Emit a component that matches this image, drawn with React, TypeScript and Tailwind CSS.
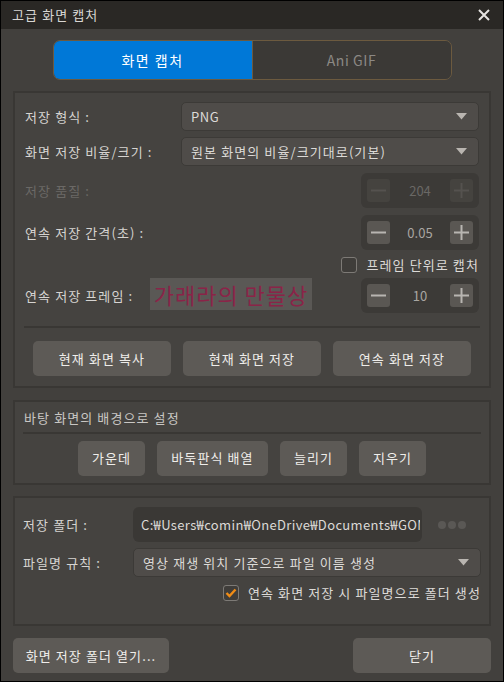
import React, { useState } from "react";

const font = { fontFamily: '"Noto Sans CJK KR", "Noto Sans", sans-serif' };

const Arrow = () => (
  <svg width="11" height="7" viewBox="0 0 11 7" className="shrink-0">
    <path d="M0 0 H11 L5.5 6.5 Z" fill="#b9b5b0" />
  </svg>
);

const Dropdown = ({ value, className }: { value: string; className: string }) => (
  <div
    className={`flex items-center justify-between h-[29px] pl-[9px] pr-[11px] rounded-[5px] bg-[#4f4c49] border border-[#3c3a37] text-[13px] text-[#dcdad7] ${className}`}
  >
    <span>{value}</span>
    <Arrow />
  </div>
);

const SpinButton = ({ plus, disabled }: { plus?: boolean; disabled?: boolean }) => {
  const c = disabled ? "#55524f" : "#b8b5b1";
  return (
    <div
      className={`w-[23px] h-[23px] rounded-[3px] flex items-center justify-center ${
        disabled ? "bg-[#45433f]" : "bg-[#5a5753]"
      }`}
    >
      <svg width="15" height="15" viewBox="0 0 15 15">
        <rect x="0" y="6.5" width="15" height="2" fill={c} />
        {plus && <rect x="6.5" y="0" width="2" height="15" fill={c} />}
      </svg>
    </div>
  );
};

const Spinner = ({ value, disabled }: { value: string; disabled?: boolean }) => (
  <div className="ml-auto w-[118px] h-[35px] rounded-[6px] bg-[#3c3a37] flex items-center justify-between px-[6px]">
    <SpinButton disabled={disabled} />
    <span className={`text-[13px] tracking-normal ${disabled ? "text-[#6a6865]" : "text-[#a9a6a2]"}`}>
      {value}
    </span>
    <SpinButton plus disabled={disabled} />
  </div>
);

const Btn = ({ label, className }: { label: string; className: string }) => (
  <button
    className={`h-[35px] rounded-[5px] bg-[#5d5a56] text-[13px] text-[#efedea] flex items-center justify-center ${className}`}
  >
    {label}
  </button>
);

export default function App() {
  const [tab, setTab] = useState(0);

  return (
    <div
      className="w-[504px] h-[682px] border border-black bg-[#42403d] flex flex-col text-[#d6d4d1] tracking-[1.1px]"
      style={font}
    >
      {/* title bar */}
      <div className="h-[28px] shrink-0 bg-[#2a2825] flex items-center justify-between pl-[11px] pr-[13px]">
        <span className="text-[13px] text-[#d9d7d4]">고급 화면 캡처</span>
        <svg width="12" height="12" viewBox="0 0 12 12">
          <path d="M1 1 L11 11 M11 1 L1 11" stroke="#e6e4e1" strokeWidth="2" />
        </svg>
      </div>

      {/* tabs */}
      <div className="mt-[11px] mx-auto w-[399px] h-[40px] flex rounded-[7px] border border-[#6c5a3f] overflow-hidden">
        <button
          onClick={() => setTab(0)}
          className={`w-[199px] text-[14px] tracking-[1.5px] border-r border-[#6c5a3f] ${
            tab === 0 ? "bg-[#0078d7] text-white" : "bg-[#3b3936] text-[#8b8884]"
          }`}
        >
          화면 캡처
        </button>
        <button
          onClick={() => setTab(1)}
          className={`flex-1 text-[14px] tracking-[0.6px] ${
            tab === 1 ? "bg-[#0078d7] text-white" : "bg-[#3b3936] text-[#8b8884]"
          }`}
        >
          Ani GIF
        </button>
      </div>

      <div className="px-[12px] flex flex-col">
        {/* panel 1 */}
        <div className="mt-[11px] h-[297px] border-2 border-[#393734] bg-[#454340] px-[10px] pt-[9px] flex flex-col">
          <div className="flex items-center">
            <span className="w-[156px] text-[13px]">저장 형식 :</span>
            <Dropdown value="PNG" className="flex-1 tracking-[0.5px]" />
          </div>
          <div className="mt-[6px] flex items-center">
            <span className="w-[156px] text-[13px]">화면 저장 비율/크기 :</span>
            <Dropdown value="원본 화면의 비율/크기대로(기본)" className="flex-1" />
          </div>
          <div className="mt-[7px] flex items-center">
            <span className="text-[13px] text-[#6b6966]">저장 품질 :</span>
            <Spinner value="204" disabled />
          </div>
          <div className="mt-[7px] flex items-center">
            <span className="text-[13px]">연속 저장 간격(초) :</span>
            <Spinner value="0.05" />
          </div>
          <div className="mt-[6px] h-[17px] flex items-center justify-end gap-[9px]">
            <span className="w-[16px] h-[16px] rounded-[3px] border border-[#7d7a76] bg-[#3f3d3a]" />
            <span className="text-[13px] text-[#dcdad7]">프레임 단위로 캡처</span>
          </div>
          <div className="mt-[5px] flex items-center">
            <span className="w-[125px] text-[13px]">연속 저장 프레임 :</span>
            <span className="w-[162px] h-[32px] -mt-[4px] bg-[#5a5855] text-[22px] tracking-[1px] leading-[32px] text-center text-[#8a2448] whitespace-nowrap">
              가래라의 만물상
            </span>
            <Spinner value="10" />
          </div>
          <div className="mt-[13px] mx-[-1px] h-[2px] bg-[#393734]" />
          <div className="mt-[13px] flex justify-between px-[8px]">
            <Btn label="현재 화면 복사" className="w-[138px]" />
            <Btn label="현재 화면 저장" className="w-[138px]" />
            <Btn label="연속 화면 저장" className="w-[138px]" />
          </div>
        </div>

        {/* panel 2 */}
        <div className="mt-[12px] h-[85px] border-2 border-[#393734] bg-[#454340] px-[8px] flex flex-col">
          <span className="mt-[6px] text-[13px] text-[#c9c7c4] pl-[1px]">바탕 화면의 배경으로 설정</span>
          <div className="mt-[4px] h-[2px] bg-[#393734]" />
          <div className="mt-[7px] flex justify-center gap-[12px]">
            <Btn label="가운데" className="w-[67px]" />
            <Btn label="바둑판식 배열" className="w-[111px]" />
            <Btn label="늘리기" className="w-[67px]" />
            <Btn label="지우기" className="w-[67px]" />
          </div>
        </div>

        {/* panel 3 */}
        <div className="mt-[11px] h-[130px] border-2 border-[#393734] bg-[#454340] pl-[8px] pr-[8px] pt-[9px] flex flex-col">
          <div className="flex items-center">
            <span className="w-[110px] text-[13px]">저장 폴더 :</span>
            <div className="w-[289px] h-[35px] rounded-[6px] bg-[#3a3835] pl-[8px] pr-[2px] flex items-center overflow-hidden">
              <span className="text-[13px] tracking-[0.35px] text-[#dcdad7] whitespace-nowrap overflow-hidden">
                C:₩Users₩comin₩OneDrive₩Documents₩GOM
              </span>
            </div>
            <div className="ml-[16px] flex gap-[2px]">
              <span className="w-[8px] h-[8px] rounded-full bg-[#5a5855]" />
              <span className="w-[8px] h-[8px] rounded-full bg-[#5a5855]" />
              <span className="w-[8px] h-[8px] rounded-full bg-[#5a5855]" />
            </div>
          </div>
          <div className="mt-[6px] flex items-center">
            <span className="w-[110px] text-[13px]">파일명 규칙 :</span>
            <Dropdown value="영상 재생 위치 기준으로 파일 이름 생성" className="flex-1" />
          </div>
          <div className="mt-[6px] flex items-center justify-end gap-[9px]">
            <span className="w-[16px] h-[16px] rounded-[3px] border border-[#7d7a76] bg-[#3f3d3a] flex items-center justify-center">
              <svg width="12" height="10" viewBox="0 0 12 10">
                <path d="M1.5 5 L4.5 8 L10.5 1.5" stroke="#f08c16" strokeWidth="2.4" fill="none" />
              </svg>
            </span>
            <span className="text-[13px] text-[#dcdad7]">연속 화면 저장 시 파일명으로 폴더 생성</span>
          </div>
        </div>

        {/* footer */}
        <div className="mt-[12px] flex justify-between">
          <Btn label="화면 저장 폴더 열기..." className="w-[156px]" />
          <Btn label="닫기" className="w-[138px]" />
        </div>
      </div>
    </div>
  );
}
